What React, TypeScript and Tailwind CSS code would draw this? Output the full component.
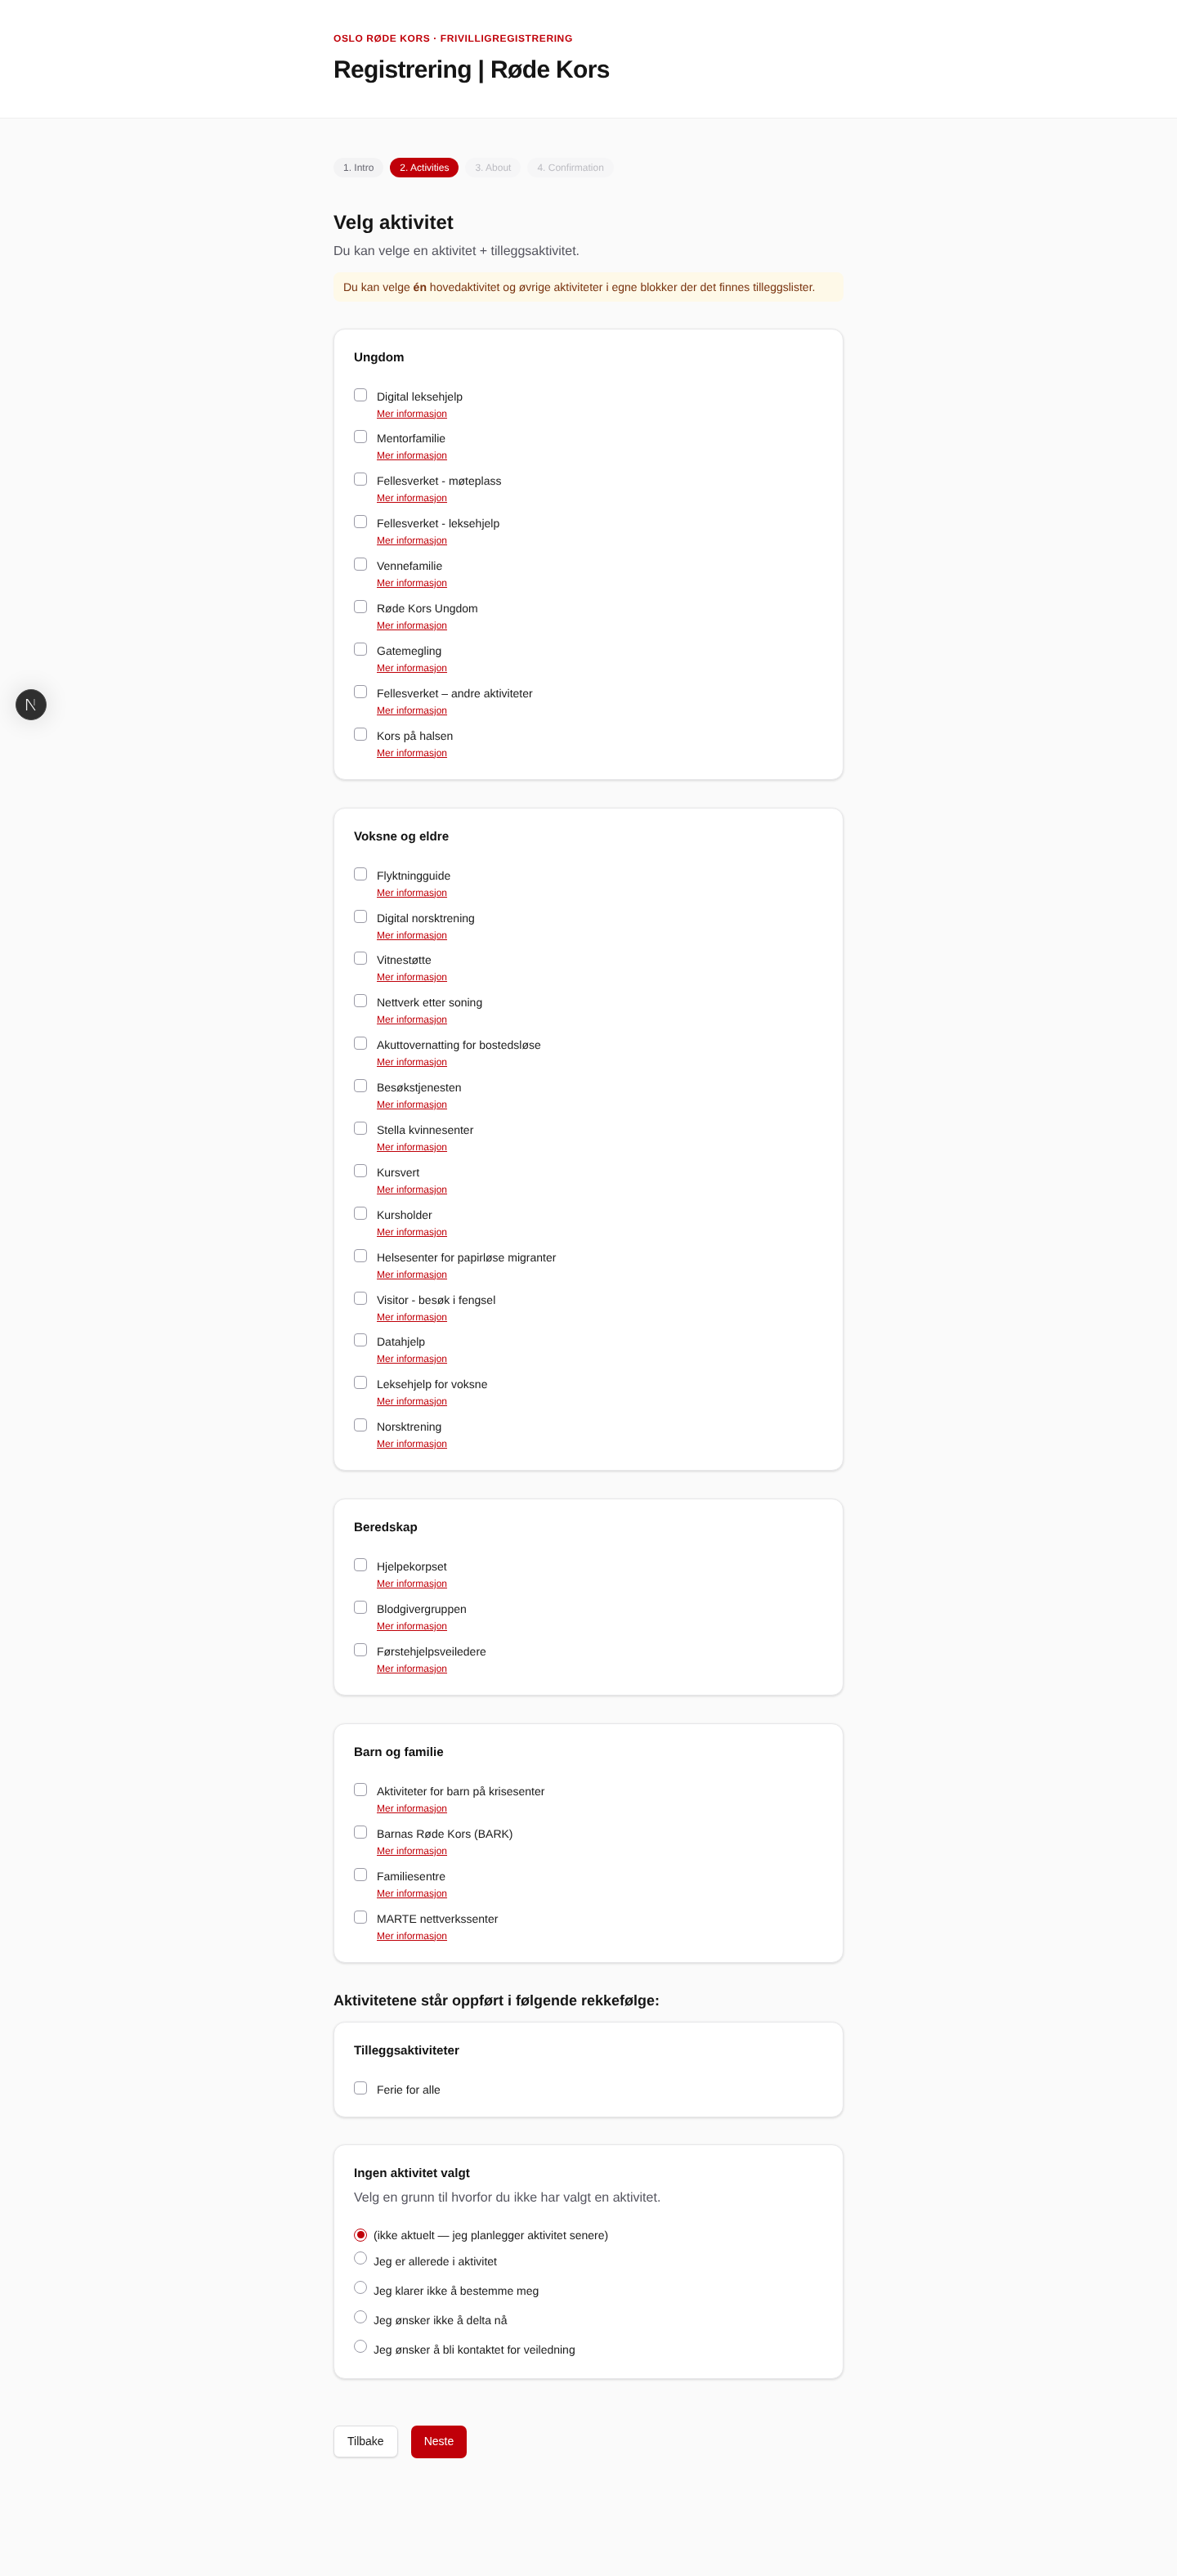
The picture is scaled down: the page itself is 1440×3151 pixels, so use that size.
import type { ReactNode } from "react";

const blocks: { title: string; items: string[] }[] = [
  {
    title: "Ungdom",
    items: [
      "Digital leksehjelp",
      "Mentorfamilie",
      "Fellesverket - møteplass",
      "Fellesverket - leksehjelp",
      "Vennefamilie",
      "Røde Kors Ungdom",
      "Gatemegling",
      "Fellesverket – andre aktiviteter",
      "Kors på halsen",
    ],
  },
  {
    title: "Voksne og eldre",
    items: [
      "Flyktningguide",
      "Digital norsktrening",
      "Vitnestøtte",
      "Nettverk etter soning",
      "Akuttovernatting for bostedsløse",
      "Besøkstjenesten",
      "Stella kvinnesenter",
      "Kursvert",
      "Kursholder",
      "Helsesenter for papirløse migranter",
      "Visitor - besøk i fengsel",
      "Datahjelp",
      "Leksehjelp for voksne",
      "Norsktrening",
    ],
  },
  {
    title: "Beredskap",
    items: ["Hjelpekorpset", "Blodgivergruppen", "Førstehjelpsveiledere"],
  },
  {
    title: "Barn og familie",
    items: [
      "Aktiviteter for barn på krisesenter",
      "Barnas Røde Kors (BARK)",
      "Familiesentre",
      "MARTE nettverkssenter",
    ],
  },
];

const reasons = [
  "Jeg er allerede i aktivitet",
  "Jeg klarer ikke å bestemme meg",
  "Jeg ønsker ikke å delta nå",
  "Jeg ønsker å bli kontaktet for veiledning",
];

function Card({ children }: { children: ReactNode }) {
  return (
    <section className="rounded-[14px] border border-[#e7e7e9] bg-white px-6 pt-6 pb-6 shadow-[0_1px_3px_rgba(0,0,0,0.14)]">
      {children}
    </section>
  );
}

function Checkbox() {
  return <span className="h-4 w-4 shrink-0 rounded-[4px] border border-[#9a9aa6] bg-white" />;
}

function Activity({ name }: { name: string }) {
  return (
    <div className="flex h-[39px] gap-3">
      <Checkbox />
      <div>
        <div className="mt-[2px] text-[14px] leading-[16px] text-[#1a1a1a]">{name}</div>
        <a className="mt-[6px] block text-[12px] leading-[14px] text-[#c00009] underline">Mer informasjon</a>
      </div>
    </div>
  );
}

function Step({ label, state }: { label: string; state: "done" | "active" | "todo" }) {
  if (state === "active") {
    return <span className="flex h-6 items-center rounded-full bg-[#c00009] px-3 text-[12px] text-white">{label}</span>;
  }
  if (state === "done") {
    return <span className="flex h-6 items-center rounded-full bg-[#f3f3f4] px-3 text-[12px] text-[#666670]">{label}</span>;
  }
  return <span className="flex h-6 items-center rounded-full bg-[#f6f6f7] px-3 text-[12px] text-[#bcbcc2]">{label}</span>;
}

export default function App() {
  return (
    <div className="relative min-h-[3151px] bg-[#fafafa] font-['Liberation_Sans',Arial,sans-serif] text-[#111111] antialiased [text-rendering:geometricPrecision]">
      <header className="h-[145px] border-b border-[#eeeeee] bg-white">
        <div className="mx-auto w-[624px] pt-[39px] [will-change:transform]">
          <div className="text-[12px] font-bold leading-[16px] tracking-[0.6px] text-[#c00009]">
            OSLO RØDE KORS · FRIVILLIGREGISTRERING
          </div>
          <h1 className="mt-[13px] text-[30px] font-bold leading-[36px] tracking-[-0.65px] text-[#151515]">Registrering | Røde Kors</h1>
        </div>
      </header>

      <main className="mx-auto w-[624px] pt-[48px] [will-change:transform]">
        <nav className="flex gap-2">
          <Step label="1. Intro" state="done" />
          <Step label="2. Activities" state="active" />
          <Step label="3. About" state="todo" />
          <Step label="4. Confirmation" state="todo" />
        </nav>

        <h2 className="mt-[41px] text-[24px] font-bold leading-[30px] text-[#151515]">Velg aktivitet</h2>
        <p className="mt-[8px] text-[16px] leading-[24px] text-[#55555f]">Du kan velge en aktivitet + tilleggsaktivitet.</p>
        <div className="mt-[13px] rounded-[8px] bg-[#fef9e8] px-3 py-[10px] text-[14px] leading-[16px] text-[#7a3410]">
          Du kan velge <b>én</b> hovedaktivitet og øvrige aktiviteter i egne blokker der det finnes tilleggslister.
        </div>

        <div className="mt-[32.5px] flex flex-col gap-[34px]">
          {blocks.map((b) => (
            <Card key={b.title}>
              <h3 className="mb-[26px] text-[15.2px] font-bold leading-[22px] text-[#111111]">{b.title}</h3>
              <div className="flex flex-col gap-[12.9px]">
                {b.items.map((it) => (
                  <Activity key={it} name={it} />
                ))}
              </div>
            </Card>
          ))}
        </div>

        <h3 className="mt-[34px] text-[18px] font-bold leading-[24px] text-[#151515]">Aktivitetene står oppført i følgende rekkefølge:</h3>

        <div className="mt-[14px]">
          <Card>
            <h3 className="mb-[26px] text-[15.2px] font-bold leading-[22px] text-[#111111]">Tilleggsaktiviteter</h3>
            <div className="flex h-[19px] gap-3">
              <Checkbox />
              <span className="mt-[2px] text-[14px] leading-[16px] text-[#1a1a1a]">Ferie for alle</span>
            </div>
          </Card>
        </div>

        <div className="mt-[33px]">
          <Card>
            <h3 className="text-[15.2px] font-bold leading-[22px] text-[#111111]">Ingen aktivitet valgt</h3>
            <p className="mt-[7px] text-[16px] leading-[24px] text-[#55555f]">Velg en grunn til hvorfor du ikke har valgt en aktivitet.</p>
            <div className="mt-[25px] flex items-center gap-2">
              <span className="flex h-4 w-4 items-center justify-center rounded-full border border-[#c00009] bg-white">
                <span className="h-[9px] w-[9px] rounded-full bg-[#c00009]" />
              </span>
              <span className="text-[14px] leading-[16px] text-[#1a1a1a]">(ikke aktuelt — jeg planlegger aktivitet senere)</span>
            </div>
            <div className="mt-[12px] flex flex-col gap-[13px]">
              {reasons.map((r) => (
                <div key={r} className="flex h-[23px] gap-2">
                  <span className="h-4 w-4 rounded-full border border-[#9a9aa6] bg-white" />
                  <span className="mt-[4px] text-[14px] leading-[16px] text-[#1a1a1a]">{r}</span>
                </div>
              ))}
            </div>
          </Card>
        </div>

        <div className="mt-[57px] flex items-start gap-4">
          <button className="h-[39px] rounded-[7px] border border-[#dddddf] bg-white px-4 text-[14px] text-[#1a1a1a] shadow-[0_1px_2px_rgba(0,0,0,0.12)]">Tilbake</button>
          <button className="h-[40px] rounded-[7px] bg-[#c00009] px-4 text-[14px] text-white">Neste</button>
        </div>
      </main>

      <div className="absolute left-[19px] top-[843px] flex h-[38px] w-[38px] items-center justify-center rounded-full border border-[#4a4a4a] bg-[#2f2f2f] shadow-[0_0_30px_rgba(0,0,0,0.14)]">
        <svg width="14" height="16" viewBox="0 0 14 16" fill="none">
          <path d="M1.6 15V1.6H2.6L12 15" stroke="#f2f2f2" strokeWidth="1.3" />
          <path d="M11 1V9" stroke="#999999" strokeWidth="1.3" />
        </svg>
      </div>
    </div>
  );
}
